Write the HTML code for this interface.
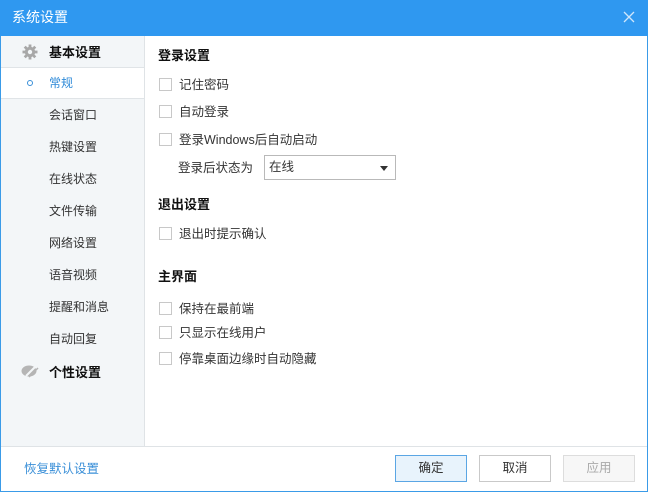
<!DOCTYPE html>
<html><head><meta charset="utf-8"><style>
*{margin:0;padding:0;box-sizing:border-box}
body{width:648px;height:492px;overflow:hidden;font-family:"Liberation Sans","Noto Sans CJK SC",sans-serif;font-size:12px;color:#333;background:#fff;position:relative}
.win{position:absolute;left:0;top:0;width:648px;height:492px;border:1px solid #3a9be8}
.title{position:absolute;left:0;top:0;width:648px;height:36px;background:#2f98f0;color:#fff;font-size:14px;line-height:35px;padding-left:12px}
.close{position:absolute;right:12px;top:10px;width:14px;height:14px}
.side{position:absolute;left:1px;top:36px;width:144px;height:410px;background:#f3f6f8;border-right:1px solid #dfe3e6}
.it{position:absolute;left:48px;font-size:12px;color:#333}
.hd{font-weight:bold;font-size:13px;color:#111}
.abs{position:absolute}
.sec{position:absolute;left:158px;font-weight:bold;font-size:13px;color:#111}
.cb{position:absolute;left:159px;width:13px;height:13px;border:1px solid #c8c8c8;background:#fff}
.lb{position:absolute;left:179px;font-size:12.5px}
.foot{position:absolute;left:1px;top:446px;width:646px;border-top:1px solid #dfe3e6}
.btn{position:absolute;top:455px;width:72px;height:27px;border:1px solid #c9c9c9;background:#fff;text-align:center;line-height:24px;font-size:12.5px}
</style></head><body>
<div class="win"></div>
<div class="title">系统设置
<svg class="close" viewBox="0 0 14 14"><path d="M2 2L12 12M12 2L2 12" stroke="#cfe6fb" stroke-width="1.3"/></svg></div>
<div class="side">
<div class="abs" style="left:0;top:0;width:143px;height:32px;border-bottom:1px solid #e0e4e7"></div>
<svg class="abs" style="left:21px;top:8px" width="16" height="16" viewBox="0 0 16 16"><g fill="#a8a8a8"><circle cx="8" cy="8" r="5.2"/><rect x="6.6" y="0.5" width="2.8" height="15"/><rect x="0.5" y="6.6" width="15" height="2.8"/><rect x="6.6" y="0.5" width="2.8" height="15" transform="rotate(45 8 8)"/><rect x="6.6" y="0.5" width="2.8" height="15" transform="rotate(-45 8 8)"/></g><circle cx="8" cy="8" r="2.2" fill="#f3f6f8"/></svg>
<div class="it hd" style="top:6px">基本设置</div>
<div class="abs" style="left:0;top:32px;width:143px;height:31px;background:#fff;border-bottom:1px solid #e0e4e7"></div>
<div class="abs" style="left:26px;top:44px;width:6px;height:6px;border:1px solid #3a8fd8;border-radius:50%"></div>
<div class="it" style="top:38px;color:#2e8ad8">常规</div>
<div class="it" style="top:70px">会话窗口</div>
<div class="it" style="top:102px">热键设置</div>
<div class="it" style="top:134px">在线状态</div>
<div class="it" style="top:166px">文件传输</div>
<div class="it" style="top:198px">网络设置</div>
<div class="it" style="top:230px">语音视频</div>
<div class="it" style="top:262px">提醒和消息</div>
<div class="it" style="top:294px">自动回复</div>
<svg class="abs" style="left:20px;top:328px" width="18" height="14" viewBox="0 0 18 14"><ellipse cx="8" cy="7" rx="7.5" ry="5.5" fill="#b5b5b5"/><path d="M5 12L15 2" stroke="#f3f6f8" stroke-width="2"/><path d="M8 13L17 4" stroke="#b5b5b5" stroke-width="1.5"/></svg>
<div class="it hd" style="top:326px">个性设置</div>
</div>
<div class="sec" style="top:45px">登录设置</div>
<div class="cb" style="top:78px"></div><div class="lb" style="top:74px">记住密码</div>
<div class="cb" style="top:105px"></div><div class="lb" style="top:101px">自动登录</div>
<div class="cb" style="top:133px"></div><div class="lb" style="top:129px">登录Windows后自动启动</div>
<div class="lb" style="left:178px;top:157px">登录后状态为</div>
<div class="abs" style="left:264px;top:155px;width:132px;height:25px;border:1px solid #b9b9b9;background:#fff;padding-left:4px;line-height:22px;font-size:12.5px">在线
<div class="abs" style="right:7px;top:10px;width:0;height:0;border-left:4px solid transparent;border-right:4px solid transparent;border-top:5px solid #333"></div></div>
<div class="sec" style="top:194px">退出设置</div>
<div class="cb" style="top:227px"></div><div class="lb" style="top:223px">退出时提示确认</div>
<div class="sec" style="top:266px">主界面</div>
<div class="cb" style="top:302px"></div><div class="lb" style="top:298px">保持在最前端</div>
<div class="cb" style="top:326px"></div><div class="lb" style="top:322px">只显示在线用户</div>
<div class="cb" style="top:352px"></div><div class="lb" style="top:348px">停靠桌面边缘时自动隐藏</div>
<div class="foot"></div>
<div class="abs" style="left:24px;top:458px;color:#3a8fd8;font-size:12.5px">恢复默认设置</div>
<div class="btn" style="left:395px;background:#e8f3fc;border-color:#5ba6e4">确定</div>
<div class="btn" style="left:479px">取消</div>
<div class="btn" style="left:563px;color:#aaa;border-color:#ddd;background:#f7f7f7">应用</div>
</body></html>
